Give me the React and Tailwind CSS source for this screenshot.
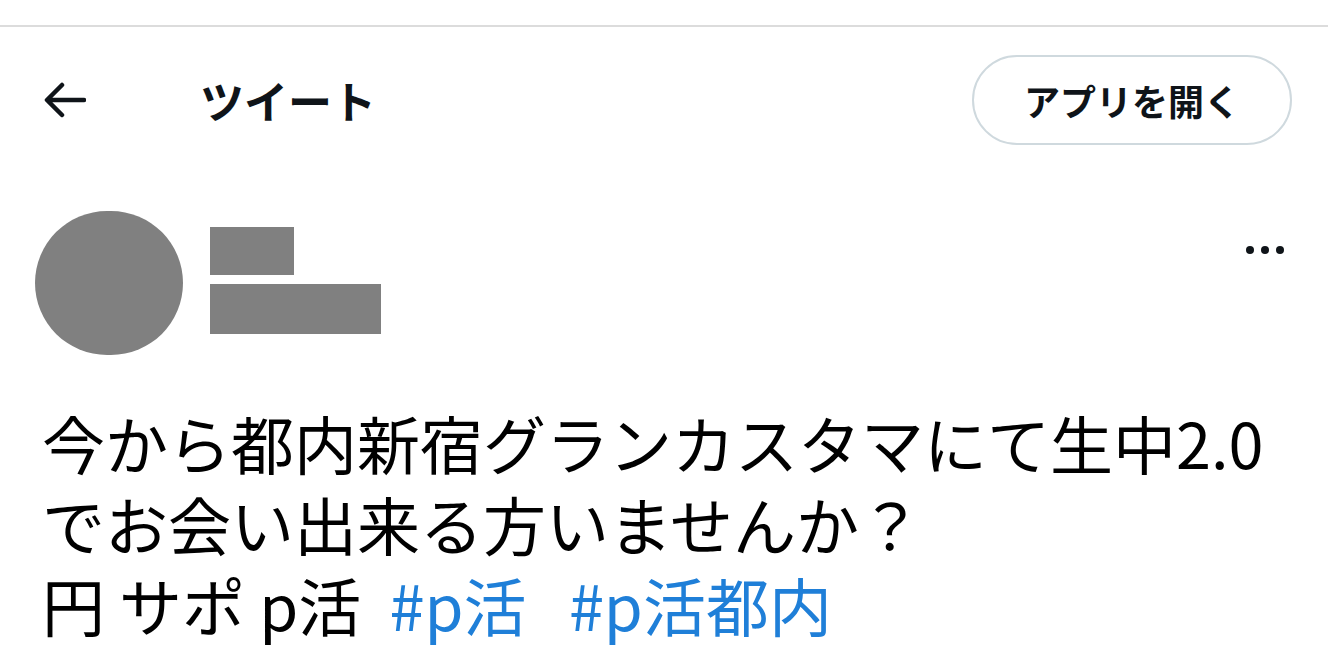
import React from "react";

export default function App() {
  const font = { fontFamily: '"Noto Sans CJK JP", "Noto Sans", sans-serif' };
  return (
    <div className="w-[1328px] h-[665px] bg-white overflow-hidden text-[#0f1419]" style={font}>
      <div className="h-[25px]" />
      <div className="h-[2px] bg-[#dcdcdc]" />
      <div className="flex items-center justify-between pl-[44px] pr-[36px] pt-[28px]">
        <div className="flex items-center">
          <svg width="42" height="36" viewBox="0 0 42 36" fill="none" stroke="#0f1419" strokeWidth="4.5" strokeLinecap="round" strokeLinejoin="round">
            <path d="M40 18H4M18 3L3 18l15 15" />
          </svg>
          <span className="ml-[114px] text-[44px] font-bold leading-none">ツイート</span>
        </div>
        <div className="w-[320px] h-[90px] rounded-full border-2 border-[#cfd9de] flex items-center justify-center">
          <span className="text-[36px] font-bold leading-none">アプリを開く</span>
        </div>
      </div>
      <div className="flex items-start justify-between pl-[35px] pr-[44px] mt-[66px]">
        <div className="flex items-center">
          <div className="w-[148px] h-[144px] rounded-full bg-[#808080]" />
          <div className="ml-[27px] mb-[6px] flex flex-col gap-[9px]">
            <div className="w-[84px] h-[48px] bg-[#808080]" />
            <div className="w-[171px] h-[50px] bg-[#808080]" />
          </div>
        </div>
        <div className="flex gap-[7px] mt-[35px]">
          <div className="w-[8px] h-[8px] rounded-full bg-[#0f1419]" />
          <div className="w-[8px] h-[8px] rounded-full bg-[#0f1419]" />
          <div className="w-[8px] h-[8px] rounded-full bg-[#0f1419]" />
        </div>
      </div>
      <div className="pl-[42px] mt-[46px] text-[63px] leading-[81px] whitespace-pre text-black">
        <div>今から都内新宿グランカスタマにて生中2.0</div>
        <div>でお会い出来る方いませんか？</div>
        <div>
          円 サポ p活  <span className="text-[#1f7fd8]">#p活</span>   <span className="text-[#1f7fd8]">#p活都内</span>
        </div>
      </div>
    </div>
  );
}
